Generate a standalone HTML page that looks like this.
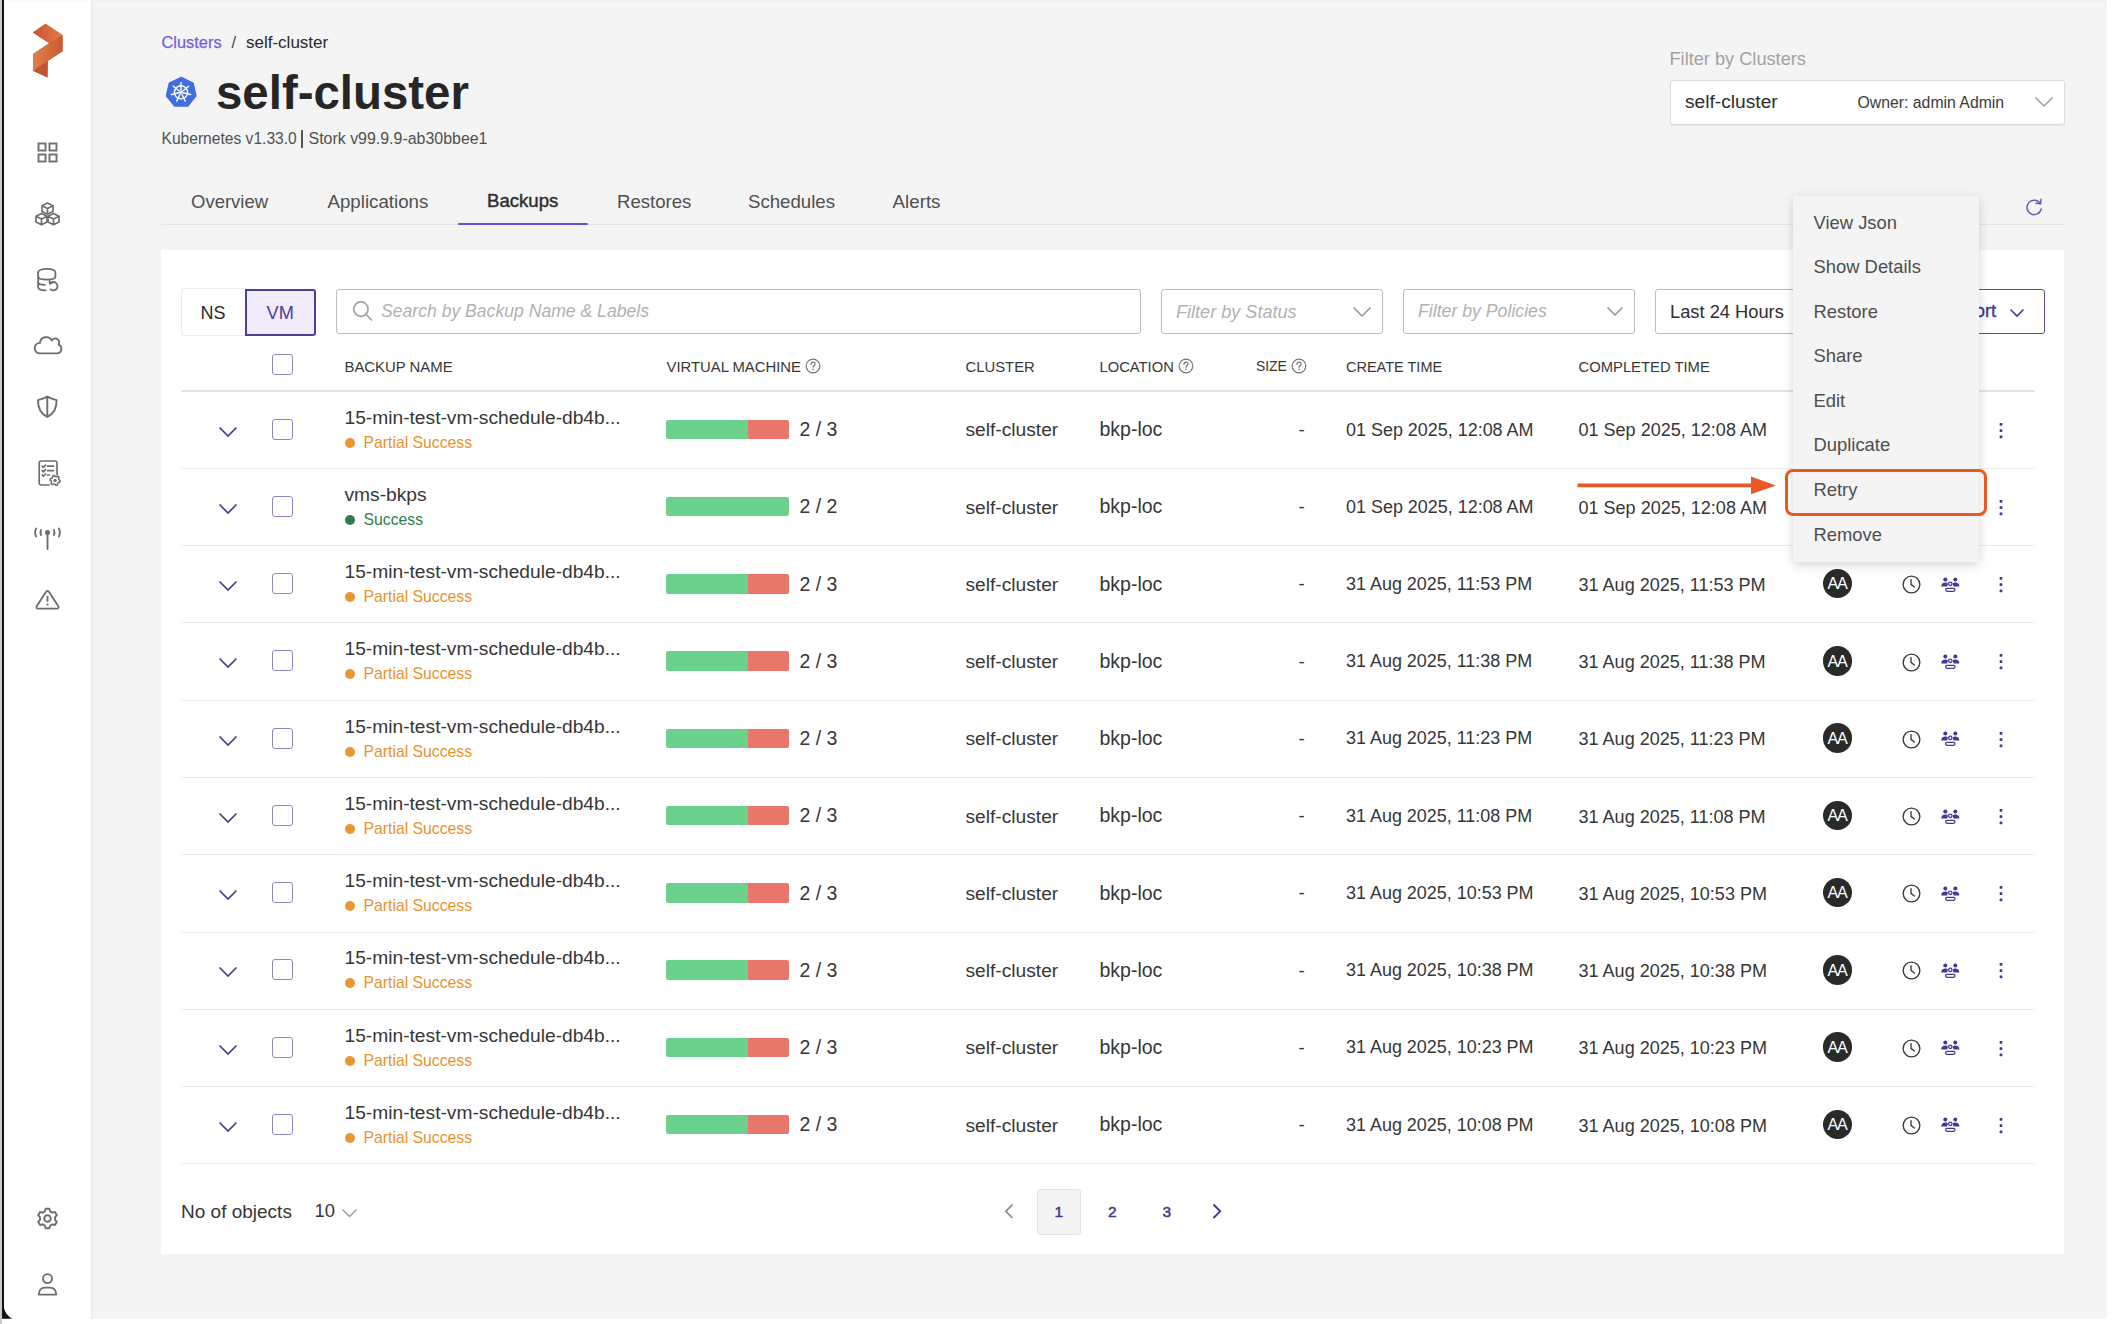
<!DOCTYPE html>
<html><head><meta charset="utf-8"><title>self-cluster backups</title>
<style>
html,body{margin:0;padding:0;}
body{width:2112px;height:1324px;position:relative;overflow:hidden;background:#fff;font-family:"Liberation Sans", sans-serif;}
.t{position:absolute;white-space:pre;}
</style></head><body>
<div style="position:absolute;left:0px;top:0px;width:2px;height:1324px;background:#c8cbc8"></div>
<div style="position:absolute;left:2px;top:0px;width:1.5px;height:1318px;background:#111"></div>
<svg style="position:absolute;left:2px;top:1304.5px" width="14" height="14" viewBox="0 0 14 14" fill="none"><path d="M0 0 L1.5 0 C2 6 5 11 10.5 13.8 L0 13.8 Z" fill="#111"/></svg>
<div style="position:absolute;left:91px;top:0px;width:2015.5px;height:1318.5px;background:#f4f4f4"></div>
<div style="position:absolute;left:91px;top:0px;width:2px;height:1318.5px;background:#ededed"></div>
<div style="position:absolute;left:91px;top:0px;width:2015.5px;height:1px;background:#efefef"></div>
<div style="position:absolute;left:4px;top:0px;width:87px;height:1px;background:#fafafa"></div>
<svg style="position:absolute;left:30px;top:20px" width="36" height="62" viewBox="0 0 36 62" fill="none">
<defs>
<linearGradient id="lgA" x1="0" y1="0" x2="1" y2="0"><stop offset="0" stop-color="#c65530"/><stop offset="1" stop-color="#e27d49"/></linearGradient>
<linearGradient id="lgB" x1="0" y1="0" x2="1" y2="0"><stop offset="0" stop-color="#e37e4a"/><stop offset="1" stop-color="#c95a32"/></linearGradient>
</defs>
<polygon points="2.9,12.5 15.5,3.8 32.6,15.1 32.6,31.3 17.8,40.9 17.5,57.6 3.1,50.8 3.1,34.1 19.2,23.3" fill="#d26a3c"/>
<polygon points="2.9,12.5 15.5,3.8 32.6,15.1 19.2,23.3" fill="url(#lgA)"/>
<polygon points="3.1,34.1 19.2,23.3 32.6,15.1 32.6,31.3 17.8,40.9 3.1,50.8" fill="url(#lgB)"/>
<polygon points="3.1,50.8 17.8,40.9 17.5,57.6" fill="#c05530"/>
</svg>
<svg style="position:absolute;left:36px;top:141px" width="23" height="23" viewBox="0 0 23 23" fill="none"><g stroke="#6e6e6e" stroke-width="1.9">
<rect x="2.5" y="2.5" width="7" height="7"/><rect x="13.5" y="2.5" width="7" height="7"/>
<rect x="2.5" y="13.5" width="7" height="7"/><rect x="13.5" y="13.5" width="7" height="7"/></g></svg>
<svg style="position:absolute;left:33px;top:201px" width="29" height="27" viewBox="0 0 29 27" fill="none"><g stroke="#6e6e6e" stroke-width="1.7" stroke-linejoin="round">
<path d="M14.5 2 L20 4.8 L20 10.5 L14.5 13.3 L9 10.5 L9 4.8 Z M9 4.8 L14.5 7.6 L20 4.8 M14.5 7.6 L14.5 13.3"/>
<path d="M8.5 12.5 L14 15.3 L14 21 L8.5 23.8 L3 21 L3 15.3 Z M3 15.3 L8.5 18.1 L14 15.3 M8.5 18.1 L8.5 23.8"/>
<path d="M20.5 12.5 L26 15.3 L26 21 L20.5 23.8 L15 21 L15 15.3 Z M15 15.3 L20.5 18.1 L26 15.3 M20.5 18.1 L20.5 23.8"/>
</g></svg>
<svg style="position:absolute;left:35px;top:266px" width="25" height="28" viewBox="0 0 25 28" fill="none"><g stroke="#6e6e6e" stroke-width="1.8" stroke-linecap="round" stroke-linejoin="round">
<path d="M3.2 6.5 C3.2 4 7 2.8 11.8 2.8 C16.6 2.8 20.4 4 20.4 6.5 V10.5"/>
<path d="M3.2 6.5 V21.5 C3.2 23.2 6.5 24.2 10.5 24.3"/>
<path d="M3.2 10.8 C3.2 12.6 7 13.6 11.8 13.6 C16.6 13.6 20.4 12.6 20.4 10.8"/>
<path d="M3.2 16.5 C3.2 18 6 18.8 9.8 18.9"/>
<path d="M15 17.6 A4.2 4.2 0 1 1 15.6 23.4"/><path d="M17.4 16.4 L14.8 17.6 L14.6 14.9"/>
</g></svg>
<svg style="position:absolute;left:32px;top:333px" width="31" height="25" viewBox="0 0 31 25" fill="none"><path d="M7 20.4 H25 A4.6 4.6 0 0 0 26.6 11.6 A3.9 3.9 0 0 0 19.8 7.4 A6.3 6.3 0 0 0 8 9.9 A5.3 5.3 0 0 0 7 20.4 Z" stroke="#6e6e6e" stroke-width="1.9" stroke-linejoin="round"/></svg>
<svg style="position:absolute;left:35px;top:393px" width="25" height="27" viewBox="0 0 25 27" fill="none"><g stroke="#6e6e6e" stroke-width="1.9" stroke-linejoin="round">
<path d="M12.3 3.4 C10.2 5 6.4 6 3 7.2 C2.8 15 6 20.8 12.3 24 C18.6 20.8 21.8 15 21.6 7.2 C18.2 6 14.4 5 12.3 3.4 Z"/><path d="M12.3 3.4 V24"/></g></svg>
<svg style="position:absolute;left:37px;top:458.5px" width="27" height="30" viewBox="0 0 27 30" fill="none"><g stroke="#6e6e6e" stroke-width="1.7" stroke-linecap="round" stroke-linejoin="round">
<path d="M12 26 H4.3 C2.9 26 2.2 25.3 2.2 23.9 V4.1 C2.2 2.7 2.9 2 4.3 2 H17.9 C19.3 2 20 2.7 20 4.1 V15.5"/>
<path d="M5.2 7.2 L6.4 8.4 L8.6 6.2 M10.6 7.2 H16.5 M5.2 11.6 L6.4 12.8 L8.6 10.6 M10.6 11.6 H16.5 M5.2 16 L6.4 17.2 L8.6 15 M10.6 16 H12.3"/>
</g>
<polygon points="23.10,21.40 23.06,22.05 22.93,22.69 22.72,23.31 21.48,23.35 21.19,23.77 20.86,24.16 20.47,24.49 20.60,25.73 20.01,26.02 19.39,26.23 18.75,26.36 18.10,25.30 17.59,25.27 17.09,25.17 16.61,25.00 15.60,25.73 15.06,25.37 14.56,24.94 14.13,24.44 14.72,23.35 14.50,22.89 14.33,22.41 14.23,21.91 13.10,21.40 13.14,20.75 13.27,20.11 13.48,19.49 14.72,19.45 15.01,19.03 15.34,18.64 15.73,18.31 15.60,17.07 16.19,16.78 16.81,16.57 17.45,16.44 18.10,17.50 18.61,17.53 19.11,17.63 19.59,17.80 20.60,17.07 21.14,17.43 21.64,17.86 22.07,18.36 21.48,19.45 21.70,19.91 21.87,20.39 21.97,20.89" fill="none" stroke="#6e6e6e" stroke-width="1.5" stroke-linejoin="round"/>
<circle cx="18.1" cy="21.4" r="1.7" fill="#6e6e6e"/></svg>
<svg style="position:absolute;left:33px;top:525.8px" width="29" height="26" viewBox="0 0 29 26" fill="none"><g stroke="#6e6e6e" stroke-width="1.9" stroke-linecap="round">
<path d="M14.5 7 V23"/><circle cx="14.5" cy="6.5" r="1.6" fill="#6e6e6e"/>
<path d="M3.2 2.5 C1.8 4.5 1.8 8.5 3.2 10.5"/><path d="M25.8 2.5 C27.2 4.5 27.2 8.5 25.8 10.5"/>
<path d="M8 4 C7.4 5.5 7.4 7.5 8 9"/><path d="M21 4 C21.6 5.5 21.6 7.5 21 9"/>
</g></svg>
<svg style="position:absolute;left:34px;top:587px" width="27" height="25" viewBox="0 0 27 25" fill="none"><g stroke="#6e6e6e" stroke-width="1.9" stroke-linejoin="round" stroke-linecap="round">
<path d="M11.9 5.0 C12.7 3.6 14.3 3.6 15.1 5.0 L24.3 19.2 C25.1 20.6 24.3 21.6 22.8 21.6 H4.2 C2.7 21.6 1.9 20.6 2.7 19.2 Z"/><path d="M13.5 9.7 V13.9"/></g><circle cx="13.5" cy="17.6" r="1.15" fill="#6e6e6e"/></svg>
<svg style="position:absolute;left:34px;top:1205px" width="27" height="27" viewBox="0 0 27 27" fill="none"><polygon points="16.10,6.36 15.39,3.78 11.61,3.78 10.90,6.36 8.61,7.68 6.03,7.01 4.14,10.28 6.02,12.18 6.02,14.82 4.14,16.72 6.03,19.99 8.61,19.32 10.90,20.64 11.61,23.22 15.39,23.22 16.10,20.64 18.39,19.32 20.97,19.99 22.86,16.72 20.98,14.82 20.98,12.18 22.86,10.28 20.97,7.01 18.39,7.68" stroke="#6e6e6e" stroke-width="1.9" stroke-linejoin="round" fill="none"/>
<circle cx="13.5" cy="13.5" r="3.3" stroke="#6e6e6e" stroke-width="1.9" fill="none"/></svg>
<svg style="position:absolute;left:35px;top:1271px" width="25" height="27" viewBox="0 0 25 27" fill="none"><g stroke="#6e6e6e" stroke-width="1.9" stroke-linejoin="round">
<circle cx="12.5" cy="7.6" r="4.5"/><path d="M3.8 23.6 C3.8 19.6 6 16.6 10 16.6 H15 C19 16.6 21.2 19.6 21.2 23.6 Z"/></g></svg>
<div class="t" style="left:161.50px;top:34.12px;font-size:16.4px;line-height:16.4px;color:#7a5cdb;font-weight:400;font-style:normal;-webkit-text-stroke:0.25px #7a5cdb">Clusters</div>
<div class="t" style="left:231.50px;top:34.12px;font-size:16.4px;line-height:16.4px;color:#444;font-weight:400;font-style:normal;">/</div>
<div class="t" style="left:246.00px;top:33.61px;font-size:17.0px;line-height:17.0px;color:#2a2a2a;font-weight:400;font-style:normal;">self-cluster</div>
<svg style="position:absolute;left:166px;top:76px" width="31" height="32" viewBox="0 0 31 32" fill="none"><polygon points="15.20,1.40 27.01,7.09 29.92,19.86 21.75,30.10 8.65,30.10 0.48,19.86 3.39,7.09" fill="#416de0" stroke="#416de0" stroke-width="1.5" stroke-linejoin="round"/><g stroke="#fff" stroke-width="1.4" stroke-linecap="round"><circle cx="15" cy="16.3" r="6.6"/><line x1="15.00" y1="14.10" x2="15.00" y2="6.50"/><line x1="16.72" y1="14.93" x2="22.66" y2="10.19"/><line x1="17.14" y1="16.79" x2="24.55" y2="18.48"/><line x1="15.95" y1="18.28" x2="19.25" y2="25.13"/><line x1="14.05" y1="18.28" x2="10.75" y2="25.13"/><line x1="12.86" y1="16.79" x2="5.45" y2="18.48"/><line x1="13.28" y1="14.93" x2="7.34" y2="10.19"/></g><circle cx="15" cy="16.3" r="1.7" fill="#fff"/></svg>
<div class="t" style="left:216.00px;top:68.88px;font-size:47.4px;line-height:47.4px;color:#262626;font-weight:700;font-style:normal;">self-cluster</div>
<div class="t" style="left:161.50px;top:131.39px;font-size:15.6px;line-height:15.6px;color:#505050;font-weight:400;font-style:normal;">Kubernetes v1.33.0</div>
<div style="position:absolute;left:301px;top:130px;width:2px;height:17.5px;background:#555"></div>
<div class="t" style="left:308.50px;top:131.10px;font-size:15.95px;line-height:15.95px;color:#505050;font-weight:400;font-style:normal;">Stork v99.9.9-ab30bbee1</div>
<div class="t" style="left:1669.50px;top:49.89px;font-size:18.2px;line-height:18.2px;color:#a2a2a2;font-weight:400;font-style:normal;">Filter by Clusters</div>
<div style="position:absolute;left:1669.5px;top:79.5px;width:393.5px;height:43px;background:#fff;border:1px solid #dcdcdc;border-radius:3px;box-shadow:0 1px 1px rgba(0,0,0,0.06)"></div>
<div class="t" style="left:1685.00px;top:91.95px;font-size:19.2px;line-height:19.2px;color:#2e2e2e;font-weight:400;font-style:normal;">self-cluster</div>
<div class="t" style="left:1857.50px;top:94.83px;font-size:15.8px;line-height:15.8px;color:#3a3a3a;font-weight:400;font-style:normal;">Owner: admin Admin</div>
<svg style="position:absolute;left:2034px;top:96px" width="20" height="12" viewBox="0 0 20 12" fill="none"><path d="M1.5 1.5 L10 10 L18.5 1.5" stroke="#999" stroke-width="1.35"/></svg>
<div class="t" style="left:191.00px;top:192.94px;font-size:18.5px;line-height:18.5px;color:#4f4f4f;font-weight:400;font-style:normal;">Overview</div>
<div class="t" style="left:327.50px;top:192.77px;font-size:18.7px;line-height:18.7px;color:#4f4f4f;font-weight:400;font-style:normal;">Applications</div>
<div class="t" style="left:487.00px;top:191.66px;font-size:18.6px;line-height:18.6px;color:#303030;font-weight:400;font-style:normal;-webkit-text-stroke:0.45px #303030">Backups</div>
<div class="t" style="left:617.00px;top:192.86px;font-size:18.6px;line-height:18.6px;color:#4f4f4f;font-weight:400;font-style:normal;">Restores</div>
<div class="t" style="left:748.00px;top:192.81px;font-size:18.65px;line-height:18.65px;color:#4f4f4f;font-weight:400;font-style:normal;">Schedules</div>
<div class="t" style="left:892.50px;top:192.69px;font-size:18.8px;line-height:18.8px;color:#4f4f4f;font-weight:400;font-style:normal;">Alerts</div>
<div style="position:absolute;left:161px;top:224px;width:1903px;height:1px;background:#e4e4e4"></div>
<div style="position:absolute;left:458px;top:223px;width:130px;height:2.2px;background:#6b4fd8;border-radius:1px"></div>
<svg style="position:absolute;left:2024px;top:197px" width="20" height="20" viewBox="0 0 20 20" fill="none"><path d="M16.2 6.5 A7.2 7.2 0 1 0 17.2 12" stroke="#685ca6" stroke-width="1.45" fill="none" stroke-linecap="round"/><path d="M17 2.2 L16.6 6.9 L12 6.3" stroke="#685ca6" stroke-width="1.45" fill="none" stroke-linecap="round" stroke-linejoin="round"/></svg>
<div style="position:absolute;left:161px;top:250px;width:1903px;height:1004px;background:#fff"></div>
<div style="position:absolute;left:180.5px;top:288.3px;width:66px;height:48px;background:#fff;border:1px solid #ececec;border-right:none;border-radius:3px 0 0 3px;box-sizing:border-box"></div>
<div style="position:absolute;left:245px;top:289px;width:70.5px;height:47px;background:#f1ebfb;border:2.5px solid #4f3d9c;border-radius:0 3px 3px 0;box-sizing:border-box"></div>
<div class="t" style="left:200.50px;top:304.26px;font-size:18px;line-height:18px;color:#2a2a2a;font-weight:400;font-style:normal;">NS</div>
<div class="t" style="left:266.50px;top:304.09px;font-size:18.2px;line-height:18.2px;color:#4f3d9c;font-weight:400;font-style:normal;">VM</div>
<div style="position:absolute;left:335.5px;top:289px;width:805px;height:45px;background:#fff;border:1px solid #bdbdbd;border-radius:3px;box-sizing:border-box"></div>
<svg style="position:absolute;left:351px;top:300px" width="24" height="23" viewBox="0 0 24 23" fill="none"><circle cx="9.9" cy="9.1" r="7.2" stroke="#a2a2a2" stroke-width="1.75"/><path d="M15 14.4 L20.6 20" stroke="#a2a2a2" stroke-width="1.75" stroke-linecap="round"/></svg>
<div class="t" style="left:381.00px;top:303.10px;font-size:17.6px;line-height:17.6px;color:#b1b1b1;font-weight:400;font-style:italic;">Search by Backup Name &amp; Labels</div>
<div style="position:absolute;left:1160.5px;top:289px;width:222px;height:45px;background:#fff;border:1px solid #bdbdbd;border-radius:3px;box-sizing:border-box"></div>
<div class="t" style="left:1176.00px;top:302.68px;font-size:18.1px;line-height:18.1px;color:#b1b1b1;font-weight:400;font-style:italic;">Filter by Status</div>
<svg style="position:absolute;left:1352px;top:306px" width="20" height="13" viewBox="0 0 20 13" fill="none"><path d="M1.5 1.5 L10 10 L18.5 1.5" stroke="#939393" stroke-width="1.45"/></svg>
<div style="position:absolute;left:1402.5px;top:289px;width:232px;height:45px;background:#fff;border:1px solid #bdbdbd;border-radius:3px;box-sizing:border-box"></div>
<div class="t" style="left:1418.00px;top:303.02px;font-size:17.7px;line-height:17.7px;color:#b1b1b1;font-weight:400;font-style:italic;">Filter by Policies</div>
<svg style="position:absolute;left:1606px;top:306px" width="18" height="13" viewBox="0 0 18 13" fill="none"><path d="M1.5 1.5 L9 9 L16.5 1.5" stroke="#939393" stroke-width="1.45"/></svg>
<div style="position:absolute;left:1654.5px;top:289px;width:180px;height:45px;background:#fff;border:1px solid #bdbdbd;border-radius:3px;box-sizing:border-box"></div>
<div class="t" style="left:1670.00px;top:302.51px;font-size:18.3px;line-height:18.3px;color:#2e2e2e;font-weight:400;font-style:normal;">Last 24 Hours</div>
<div style="position:absolute;left:1900px;top:289px;width:145px;height:45px;background:#fff;border:1.5px solid #5a4ba6;border-radius:3px;box-sizing:border-box"></div>
<div class="t" style="left:1943.00px;top:302.42px;font-size:18.4px;line-height:18.4px;color:#45398f;font-weight:400;font-style:normal;-webkit-text-stroke:0.4px #45398f">Export</div>
<svg style="position:absolute;left:2009px;top:308px" width="16" height="10" viewBox="0 0 16 10" fill="none"><path d="M1.5 1.5 L8 8 L14.5 1.5" stroke="#4a3d96" stroke-width="1.6"/></svg>
<div style="position:absolute;left:272px;top:354px;width:21px;height:21px;border:1.5px solid #8f87c2;border-radius:3px;box-sizing:border-box;background:#fff"></div>
<div class="t" style="left:344.50px;top:359.59px;font-size:14.9px;line-height:14.9px;color:#383838;font-weight:400;font-style:normal;">BACKUP NAME</div>
<div class="t" style="left:666.50px;top:359.63px;font-size:14.85px;line-height:14.85px;color:#383838;font-weight:400;font-style:normal;">VIRTUAL MACHINE</div>
<svg style="position:absolute;left:804.5px;top:358px" width="16" height="16" viewBox="0 0 16 16" fill="none"><circle cx="8" cy="8" r="6.8" stroke="#777" stroke-width="1.2"/><path d="M6 6.3 C6 4.9 7 4.2 8 4.2 C9.2 4.2 10.1 5 10.1 6.1 C10.1 7.5 8.1 7.6 8.1 9.2" stroke="#777" stroke-width="1.2" stroke-linecap="round"/><circle cx="8.1" cy="11.4" r="0.8" fill="#777"/></svg>
<div class="t" style="left:965.50px;top:359.63px;font-size:14.85px;line-height:14.85px;color:#383838;font-weight:400;font-style:normal;">CLUSTER</div>
<div class="t" style="left:1099.50px;top:359.71px;font-size:14.75px;line-height:14.75px;color:#383838;font-weight:400;font-style:normal;">LOCATION</div>
<svg style="position:absolute;left:1177.5px;top:358px" width="16" height="16" viewBox="0 0 16 16" fill="none"><circle cx="8" cy="8" r="6.8" stroke="#777" stroke-width="1.2"/><path d="M6 6.3 C6 4.9 7 4.2 8 4.2 C9.2 4.2 10.1 5 10.1 6.1 C10.1 7.5 8.1 7.6 8.1 9.2" stroke="#777" stroke-width="1.2" stroke-linecap="round"/><circle cx="8.1" cy="11.4" r="0.8" fill="#777"/></svg>
<div class="t" style="left:1256.00px;top:360.43px;font-size:13.9px;line-height:13.9px;color:#383838;font-weight:400;font-style:normal;">SIZE</div>
<svg style="position:absolute;left:1290.5px;top:358px" width="16" height="16" viewBox="0 0 16 16" fill="none"><circle cx="8" cy="8" r="6.8" stroke="#777" stroke-width="1.2"/><path d="M6 6.3 C6 4.9 7 4.2 8 4.2 C9.2 4.2 10.1 5 10.1 6.1 C10.1 7.5 8.1 7.6 8.1 9.2" stroke="#777" stroke-width="1.2" stroke-linecap="round"/><circle cx="8.1" cy="11.4" r="0.8" fill="#777"/></svg>
<div class="t" style="left:1346.00px;top:359.93px;font-size:14.5px;line-height:14.5px;color:#383838;font-weight:400;font-style:normal;">CREATE TIME</div>
<div class="t" style="left:1578.50px;top:359.67px;font-size:14.8px;line-height:14.8px;color:#383838;font-weight:400;font-style:normal;">COMPLETED TIME</div>
<div style="position:absolute;left:181px;top:390px;width:1854px;height:2px;background:#e3e3e3"></div>
<div style="position:absolute;left:181px;top:468px;width:1854px;height:1px;background:#ebebeb"></div>
<svg style="position:absolute;left:218px;top:425.7px" width="20" height="12" viewBox="0 0 20 12" fill="none"><path d="M1.5 1.5 L10 10 L18.5 1.5" stroke="#4a3d8f" stroke-width="1.7"/></svg>
<div style="position:absolute;left:272px;top:418.7px;width:21px;height:21px;border:1.5px solid #8f87c2;border-radius:3px;box-sizing:border-box;background:#fff"></div>
<div class="t" style="left:344.50px;top:407.65px;font-size:19.2px;line-height:19.2px;color:#363636;font-weight:400;font-style:normal;">15-min-test-vm-schedule-db4b...</div>
<div style="position:absolute;left:344.5px;top:437.7px;width:10px;height:10px;border-radius:50%;background:#eb9535"></div>
<div class="t" style="left:363.50px;top:434.67px;font-size:15.75px;line-height:15.75px;color:#e8922e;font-weight:400;font-style:normal;">Partial Success</div>
<div style="position:absolute;left:666px;top:419.7px;width:123px;height:19.5px;border-radius:2px;background:linear-gradient(to right,#6bd18c 0,#6bd18c 82px,#e8766b 82px,#e8766b 100%)"></div>
<div class="t" style="left:799.50px;top:420.19px;font-size:19.5px;line-height:19.5px;color:#363636;font-weight:400;font-style:normal;">2 / 3</div>
<div class="t" style="left:965.50px;top:420.45px;font-size:19.2px;line-height:19.2px;color:#363636;font-weight:400;font-style:normal;">self-cluster</div>
<div class="t" style="left:1099.50px;top:420.19px;font-size:19.5px;line-height:19.5px;color:#363636;font-weight:400;font-style:normal;">bkp-loc</div>
<div class="t" style="left:1298.50px;top:420.96px;font-size:18.6px;line-height:18.6px;color:#363636;font-weight:400;font-style:normal;">-</div>
<div class="t" style="left:1346.00px;top:421.51px;font-size:17.95px;line-height:17.95px;color:#363636;font-weight:400;font-style:normal;">01 Sep 2025, 12:08 AM</div>
<div class="t" style="left:1578.50px;top:421.42px;font-size:18.05px;line-height:18.05px;color:#363636;font-weight:400;font-style:normal;">01 Sep 2025, 12:08 AM</div>
<div style="position:absolute;left:1823px;top:414.50px;width:29.4px;height:29.4px;border-radius:50%;background:#2a2a2a;"></div>
<div class="t" style="left:1827.60px;top:420.89px;font-size:16.2px;line-height:16.2px;color:#fff;font-weight:400;font-style:normal;letter-spacing:-1.3px">AA</div>
<svg style="position:absolute;left:1900.5px;top:419.8px" width="21" height="21" viewBox="0 0 21 21" fill="none"><circle cx="10.5" cy="10.5" r="8.35" stroke="#3a3a3a" stroke-width="1.35"/><path d="M10 5.6 V10.4 L13.3 13" stroke="#3a3a3a" stroke-width="1.35" stroke-linecap="round"/></svg>
<svg style="position:absolute;left:1940px;top:421.3px" width="21" height="17" viewBox="0 0 21 17" fill="none"><g fill="#443891"><circle cx="5.3" cy="3.4" r="2"/><circle cx="15.3" cy="3.4" r="2"/><path d="M1.2 10.4 C1.2 8 3 6.6 5.3 6.6 C6.8 6.6 7.6 7.2 7.9 8 L7 10.4 Z"/><path d="M19.4 10.4 C19.4 8 17.6 6.6 15.3 6.6 C13.8 6.6 13 7.2 12.7 8 L13.6 10.4 Z"/></g><g stroke="#443891" stroke-width="1.25" fill="none"><circle cx="10.3" cy="7.8" r="1.7"/><rect x="5.6" y="12.4" width="9.4" height="2.9" rx="1.45"/></g></svg>
<svg style="position:absolute;left:1997px;top:421.7px" width="8" height="17" viewBox="0 0 8 17" fill="none"><g fill="#443891"><rect x="2.6" y="1" width="2.8" height="2.8" rx="0.7"/><rect x="2.6" y="7.2" width="2.8" height="2.8" rx="0.7"/><rect x="2.6" y="13.4" width="2.8" height="2.8" rx="0.7"/></g></svg>
<div style="position:absolute;left:181px;top:545px;width:1854px;height:1px;background:#ebebeb"></div>
<svg style="position:absolute;left:218px;top:502.94px" width="20" height="12" viewBox="0 0 20 12" fill="none"><path d="M1.5 1.5 L10 10 L18.5 1.5" stroke="#4a3d8f" stroke-width="1.7"/></svg>
<div style="position:absolute;left:272px;top:495.94px;width:21px;height:21px;border:1.5px solid #8f87c2;border-radius:3px;box-sizing:border-box;background:#fff"></div>
<div class="t" style="left:344.50px;top:484.89px;font-size:19.2px;line-height:19.2px;color:#363636;font-weight:400;font-style:normal;">vms-bkps</div>
<div style="position:absolute;left:344.5px;top:514.94px;width:10px;height:10px;border-radius:50%;background:#2e7d4f"></div>
<div class="t" style="left:363.50px;top:511.91px;font-size:15.75px;line-height:15.75px;color:#2e7d4f;font-weight:400;font-style:normal;">Success</div>
<div style="position:absolute;left:666px;top:496.94px;width:123px;height:19.5px;border-radius:2px;background:#6bd18c"></div>
<div class="t" style="left:799.50px;top:497.43px;font-size:19.5px;line-height:19.5px;color:#363636;font-weight:400;font-style:normal;">2 / 2</div>
<div class="t" style="left:965.50px;top:497.69px;font-size:19.2px;line-height:19.2px;color:#363636;font-weight:400;font-style:normal;">self-cluster</div>
<div class="t" style="left:1099.50px;top:497.43px;font-size:19.5px;line-height:19.5px;color:#363636;font-weight:400;font-style:normal;">bkp-loc</div>
<div class="t" style="left:1298.50px;top:498.20px;font-size:18.6px;line-height:18.6px;color:#363636;font-weight:400;font-style:normal;">-</div>
<div class="t" style="left:1346.00px;top:498.75px;font-size:17.95px;line-height:17.95px;color:#363636;font-weight:400;font-style:normal;">01 Sep 2025, 12:08 AM</div>
<div class="t" style="left:1578.50px;top:498.66px;font-size:18.05px;line-height:18.05px;color:#363636;font-weight:400;font-style:normal;">01 Sep 2025, 12:08 AM</div>
<div style="position:absolute;left:1823px;top:491.74px;width:29.4px;height:29.4px;border-radius:50%;background:#2a2a2a;"></div>
<div class="t" style="left:1827.60px;top:498.13px;font-size:16.2px;line-height:16.2px;color:#fff;font-weight:400;font-style:normal;letter-spacing:-1.3px">AA</div>
<svg style="position:absolute;left:1900.5px;top:497.04px" width="21" height="21" viewBox="0 0 21 21" fill="none"><circle cx="10.5" cy="10.5" r="8.35" stroke="#3a3a3a" stroke-width="1.35"/><path d="M10 5.6 V10.4 L13.3 13" stroke="#3a3a3a" stroke-width="1.35" stroke-linecap="round"/></svg>
<svg style="position:absolute;left:1940px;top:498.54px" width="21" height="17" viewBox="0 0 21 17" fill="none"><g fill="#443891"><circle cx="5.3" cy="3.4" r="2"/><circle cx="15.3" cy="3.4" r="2"/><path d="M1.2 10.4 C1.2 8 3 6.6 5.3 6.6 C6.8 6.6 7.6 7.2 7.9 8 L7 10.4 Z"/><path d="M19.4 10.4 C19.4 8 17.6 6.6 15.3 6.6 C13.8 6.6 13 7.2 12.7 8 L13.6 10.4 Z"/></g><g stroke="#443891" stroke-width="1.25" fill="none"><circle cx="10.3" cy="7.8" r="1.7"/><rect x="5.6" y="12.4" width="9.4" height="2.9" rx="1.45"/></g></svg>
<svg style="position:absolute;left:1997px;top:498.94px" width="8" height="17" viewBox="0 0 8 17" fill="none"><g fill="#443891"><rect x="2.6" y="1" width="2.8" height="2.8" rx="0.7"/><rect x="2.6" y="7.2" width="2.8" height="2.8" rx="0.7"/><rect x="2.6" y="13.4" width="2.8" height="2.8" rx="0.7"/></g></svg>
<div style="position:absolute;left:181px;top:622px;width:1854px;height:1px;background:#ebebeb"></div>
<svg style="position:absolute;left:218px;top:580.18px" width="20" height="12" viewBox="0 0 20 12" fill="none"><path d="M1.5 1.5 L10 10 L18.5 1.5" stroke="#4a3d8f" stroke-width="1.7"/></svg>
<div style="position:absolute;left:272px;top:573.18px;width:21px;height:21px;border:1.5px solid #8f87c2;border-radius:3px;box-sizing:border-box;background:#fff"></div>
<div class="t" style="left:344.50px;top:562.13px;font-size:19.2px;line-height:19.2px;color:#363636;font-weight:400;font-style:normal;">15-min-test-vm-schedule-db4b...</div>
<div style="position:absolute;left:344.5px;top:592.18px;width:10px;height:10px;border-radius:50%;background:#eb9535"></div>
<div class="t" style="left:363.50px;top:589.15px;font-size:15.75px;line-height:15.75px;color:#e8922e;font-weight:400;font-style:normal;">Partial Success</div>
<div style="position:absolute;left:666px;top:574.18px;width:123px;height:19.5px;border-radius:2px;background:linear-gradient(to right,#6bd18c 0,#6bd18c 82px,#e8766b 82px,#e8766b 100%)"></div>
<div class="t" style="left:799.50px;top:574.67px;font-size:19.5px;line-height:19.5px;color:#363636;font-weight:400;font-style:normal;">2 / 3</div>
<div class="t" style="left:965.50px;top:574.93px;font-size:19.2px;line-height:19.2px;color:#363636;font-weight:400;font-style:normal;">self-cluster</div>
<div class="t" style="left:1099.50px;top:574.67px;font-size:19.5px;line-height:19.5px;color:#363636;font-weight:400;font-style:normal;">bkp-loc</div>
<div class="t" style="left:1298.50px;top:575.44px;font-size:18.6px;line-height:18.6px;color:#363636;font-weight:400;font-style:normal;">-</div>
<div class="t" style="left:1346.00px;top:575.99px;font-size:17.95px;line-height:17.95px;color:#363636;font-weight:400;font-style:normal;">31 Aug 2025, 11:53 PM</div>
<div class="t" style="left:1578.50px;top:575.90px;font-size:18.05px;line-height:18.05px;color:#363636;font-weight:400;font-style:normal;">31 Aug 2025, 11:53 PM</div>
<div style="position:absolute;left:1823px;top:568.98px;width:29.4px;height:29.4px;border-radius:50%;background:#2a2a2a;"></div>
<div class="t" style="left:1827.60px;top:575.37px;font-size:16.2px;line-height:16.2px;color:#fff;font-weight:400;font-style:normal;letter-spacing:-1.3px">AA</div>
<svg style="position:absolute;left:1900.5px;top:574.28px" width="21" height="21" viewBox="0 0 21 21" fill="none"><circle cx="10.5" cy="10.5" r="8.35" stroke="#3a3a3a" stroke-width="1.35"/><path d="M10 5.6 V10.4 L13.3 13" stroke="#3a3a3a" stroke-width="1.35" stroke-linecap="round"/></svg>
<svg style="position:absolute;left:1940px;top:575.78px" width="21" height="17" viewBox="0 0 21 17" fill="none"><g fill="#443891"><circle cx="5.3" cy="3.4" r="2"/><circle cx="15.3" cy="3.4" r="2"/><path d="M1.2 10.4 C1.2 8 3 6.6 5.3 6.6 C6.8 6.6 7.6 7.2 7.9 8 L7 10.4 Z"/><path d="M19.4 10.4 C19.4 8 17.6 6.6 15.3 6.6 C13.8 6.6 13 7.2 12.7 8 L13.6 10.4 Z"/></g><g stroke="#443891" stroke-width="1.25" fill="none"><circle cx="10.3" cy="7.8" r="1.7"/><rect x="5.6" y="12.4" width="9.4" height="2.9" rx="1.45"/></g></svg>
<svg style="position:absolute;left:1997px;top:576.18px" width="8" height="17" viewBox="0 0 8 17" fill="none"><g fill="#443891"><rect x="2.6" y="1" width="2.8" height="2.8" rx="0.7"/><rect x="2.6" y="7.2" width="2.8" height="2.8" rx="0.7"/><rect x="2.6" y="13.4" width="2.8" height="2.8" rx="0.7"/></g></svg>
<div style="position:absolute;left:181px;top:700px;width:1854px;height:1px;background:#ebebeb"></div>
<svg style="position:absolute;left:218px;top:657.42px" width="20" height="12" viewBox="0 0 20 12" fill="none"><path d="M1.5 1.5 L10 10 L18.5 1.5" stroke="#4a3d8f" stroke-width="1.7"/></svg>
<div style="position:absolute;left:272px;top:650.42px;width:21px;height:21px;border:1.5px solid #8f87c2;border-radius:3px;box-sizing:border-box;background:#fff"></div>
<div class="t" style="left:344.50px;top:639.37px;font-size:19.2px;line-height:19.2px;color:#363636;font-weight:400;font-style:normal;">15-min-test-vm-schedule-db4b...</div>
<div style="position:absolute;left:344.5px;top:669.42px;width:10px;height:10px;border-radius:50%;background:#eb9535"></div>
<div class="t" style="left:363.50px;top:666.39px;font-size:15.75px;line-height:15.75px;color:#e8922e;font-weight:400;font-style:normal;">Partial Success</div>
<div style="position:absolute;left:666px;top:651.42px;width:123px;height:19.5px;border-radius:2px;background:linear-gradient(to right,#6bd18c 0,#6bd18c 82px,#e8766b 82px,#e8766b 100%)"></div>
<div class="t" style="left:799.50px;top:651.91px;font-size:19.5px;line-height:19.5px;color:#363636;font-weight:400;font-style:normal;">2 / 3</div>
<div class="t" style="left:965.50px;top:652.17px;font-size:19.2px;line-height:19.2px;color:#363636;font-weight:400;font-style:normal;">self-cluster</div>
<div class="t" style="left:1099.50px;top:651.91px;font-size:19.5px;line-height:19.5px;color:#363636;font-weight:400;font-style:normal;">bkp-loc</div>
<div class="t" style="left:1298.50px;top:652.68px;font-size:18.6px;line-height:18.6px;color:#363636;font-weight:400;font-style:normal;">-</div>
<div class="t" style="left:1346.00px;top:653.23px;font-size:17.95px;line-height:17.95px;color:#363636;font-weight:400;font-style:normal;">31 Aug 2025, 11:38 PM</div>
<div class="t" style="left:1578.50px;top:653.14px;font-size:18.05px;line-height:18.05px;color:#363636;font-weight:400;font-style:normal;">31 Aug 2025, 11:38 PM</div>
<div style="position:absolute;left:1823px;top:646.22px;width:29.4px;height:29.4px;border-radius:50%;background:#2a2a2a;"></div>
<div class="t" style="left:1827.60px;top:652.61px;font-size:16.2px;line-height:16.2px;color:#fff;font-weight:400;font-style:normal;letter-spacing:-1.3px">AA</div>
<svg style="position:absolute;left:1900.5px;top:651.52px" width="21" height="21" viewBox="0 0 21 21" fill="none"><circle cx="10.5" cy="10.5" r="8.35" stroke="#3a3a3a" stroke-width="1.35"/><path d="M10 5.6 V10.4 L13.3 13" stroke="#3a3a3a" stroke-width="1.35" stroke-linecap="round"/></svg>
<svg style="position:absolute;left:1940px;top:653.02px" width="21" height="17" viewBox="0 0 21 17" fill="none"><g fill="#443891"><circle cx="5.3" cy="3.4" r="2"/><circle cx="15.3" cy="3.4" r="2"/><path d="M1.2 10.4 C1.2 8 3 6.6 5.3 6.6 C6.8 6.6 7.6 7.2 7.9 8 L7 10.4 Z"/><path d="M19.4 10.4 C19.4 8 17.6 6.6 15.3 6.6 C13.8 6.6 13 7.2 12.7 8 L13.6 10.4 Z"/></g><g stroke="#443891" stroke-width="1.25" fill="none"><circle cx="10.3" cy="7.8" r="1.7"/><rect x="5.6" y="12.4" width="9.4" height="2.9" rx="1.45"/></g></svg>
<svg style="position:absolute;left:1997px;top:653.42px" width="8" height="17" viewBox="0 0 8 17" fill="none"><g fill="#443891"><rect x="2.6" y="1" width="2.8" height="2.8" rx="0.7"/><rect x="2.6" y="7.2" width="2.8" height="2.8" rx="0.7"/><rect x="2.6" y="13.4" width="2.8" height="2.8" rx="0.7"/></g></svg>
<div style="position:absolute;left:181px;top:777px;width:1854px;height:1px;background:#ebebeb"></div>
<svg style="position:absolute;left:218px;top:734.66px" width="20" height="12" viewBox="0 0 20 12" fill="none"><path d="M1.5 1.5 L10 10 L18.5 1.5" stroke="#4a3d8f" stroke-width="1.7"/></svg>
<div style="position:absolute;left:272px;top:727.66px;width:21px;height:21px;border:1.5px solid #8f87c2;border-radius:3px;box-sizing:border-box;background:#fff"></div>
<div class="t" style="left:344.50px;top:716.61px;font-size:19.2px;line-height:19.2px;color:#363636;font-weight:400;font-style:normal;">15-min-test-vm-schedule-db4b...</div>
<div style="position:absolute;left:344.5px;top:746.66px;width:10px;height:10px;border-radius:50%;background:#eb9535"></div>
<div class="t" style="left:363.50px;top:743.63px;font-size:15.75px;line-height:15.75px;color:#e8922e;font-weight:400;font-style:normal;">Partial Success</div>
<div style="position:absolute;left:666px;top:728.66px;width:123px;height:19.5px;border-radius:2px;background:linear-gradient(to right,#6bd18c 0,#6bd18c 82px,#e8766b 82px,#e8766b 100%)"></div>
<div class="t" style="left:799.50px;top:729.15px;font-size:19.5px;line-height:19.5px;color:#363636;font-weight:400;font-style:normal;">2 / 3</div>
<div class="t" style="left:965.50px;top:729.41px;font-size:19.2px;line-height:19.2px;color:#363636;font-weight:400;font-style:normal;">self-cluster</div>
<div class="t" style="left:1099.50px;top:729.15px;font-size:19.5px;line-height:19.5px;color:#363636;font-weight:400;font-style:normal;">bkp-loc</div>
<div class="t" style="left:1298.50px;top:729.92px;font-size:18.6px;line-height:18.6px;color:#363636;font-weight:400;font-style:normal;">-</div>
<div class="t" style="left:1346.00px;top:730.47px;font-size:17.95px;line-height:17.95px;color:#363636;font-weight:400;font-style:normal;">31 Aug 2025, 11:23 PM</div>
<div class="t" style="left:1578.50px;top:730.38px;font-size:18.05px;line-height:18.05px;color:#363636;font-weight:400;font-style:normal;">31 Aug 2025, 11:23 PM</div>
<div style="position:absolute;left:1823px;top:723.46px;width:29.4px;height:29.4px;border-radius:50%;background:#2a2a2a;"></div>
<div class="t" style="left:1827.60px;top:729.85px;font-size:16.2px;line-height:16.2px;color:#fff;font-weight:400;font-style:normal;letter-spacing:-1.3px">AA</div>
<svg style="position:absolute;left:1900.5px;top:728.76px" width="21" height="21" viewBox="0 0 21 21" fill="none"><circle cx="10.5" cy="10.5" r="8.35" stroke="#3a3a3a" stroke-width="1.35"/><path d="M10 5.6 V10.4 L13.3 13" stroke="#3a3a3a" stroke-width="1.35" stroke-linecap="round"/></svg>
<svg style="position:absolute;left:1940px;top:730.26px" width="21" height="17" viewBox="0 0 21 17" fill="none"><g fill="#443891"><circle cx="5.3" cy="3.4" r="2"/><circle cx="15.3" cy="3.4" r="2"/><path d="M1.2 10.4 C1.2 8 3 6.6 5.3 6.6 C6.8 6.6 7.6 7.2 7.9 8 L7 10.4 Z"/><path d="M19.4 10.4 C19.4 8 17.6 6.6 15.3 6.6 C13.8 6.6 13 7.2 12.7 8 L13.6 10.4 Z"/></g><g stroke="#443891" stroke-width="1.25" fill="none"><circle cx="10.3" cy="7.8" r="1.7"/><rect x="5.6" y="12.4" width="9.4" height="2.9" rx="1.45"/></g></svg>
<svg style="position:absolute;left:1997px;top:730.66px" width="8" height="17" viewBox="0 0 8 17" fill="none"><g fill="#443891"><rect x="2.6" y="1" width="2.8" height="2.8" rx="0.7"/><rect x="2.6" y="7.2" width="2.8" height="2.8" rx="0.7"/><rect x="2.6" y="13.4" width="2.8" height="2.8" rx="0.7"/></g></svg>
<div style="position:absolute;left:181px;top:854px;width:1854px;height:1px;background:#ebebeb"></div>
<svg style="position:absolute;left:218px;top:811.9px" width="20" height="12" viewBox="0 0 20 12" fill="none"><path d="M1.5 1.5 L10 10 L18.5 1.5" stroke="#4a3d8f" stroke-width="1.7"/></svg>
<div style="position:absolute;left:272px;top:804.9px;width:21px;height:21px;border:1.5px solid #8f87c2;border-radius:3px;box-sizing:border-box;background:#fff"></div>
<div class="t" style="left:344.50px;top:793.85px;font-size:19.2px;line-height:19.2px;color:#363636;font-weight:400;font-style:normal;">15-min-test-vm-schedule-db4b...</div>
<div style="position:absolute;left:344.5px;top:823.9px;width:10px;height:10px;border-radius:50%;background:#eb9535"></div>
<div class="t" style="left:363.50px;top:820.87px;font-size:15.75px;line-height:15.75px;color:#e8922e;font-weight:400;font-style:normal;">Partial Success</div>
<div style="position:absolute;left:666px;top:805.9px;width:123px;height:19.5px;border-radius:2px;background:linear-gradient(to right,#6bd18c 0,#6bd18c 82px,#e8766b 82px,#e8766b 100%)"></div>
<div class="t" style="left:799.50px;top:806.39px;font-size:19.5px;line-height:19.5px;color:#363636;font-weight:400;font-style:normal;">2 / 3</div>
<div class="t" style="left:965.50px;top:806.65px;font-size:19.2px;line-height:19.2px;color:#363636;font-weight:400;font-style:normal;">self-cluster</div>
<div class="t" style="left:1099.50px;top:806.39px;font-size:19.5px;line-height:19.5px;color:#363636;font-weight:400;font-style:normal;">bkp-loc</div>
<div class="t" style="left:1298.50px;top:807.16px;font-size:18.6px;line-height:18.6px;color:#363636;font-weight:400;font-style:normal;">-</div>
<div class="t" style="left:1346.00px;top:807.71px;font-size:17.95px;line-height:17.95px;color:#363636;font-weight:400;font-style:normal;">31 Aug 2025, 11:08 PM</div>
<div class="t" style="left:1578.50px;top:807.62px;font-size:18.05px;line-height:18.05px;color:#363636;font-weight:400;font-style:normal;">31 Aug 2025, 11:08 PM</div>
<div style="position:absolute;left:1823px;top:800.70px;width:29.4px;height:29.4px;border-radius:50%;background:#2a2a2a;"></div>
<div class="t" style="left:1827.60px;top:807.09px;font-size:16.2px;line-height:16.2px;color:#fff;font-weight:400;font-style:normal;letter-spacing:-1.3px">AA</div>
<svg style="position:absolute;left:1900.5px;top:806.0px" width="21" height="21" viewBox="0 0 21 21" fill="none"><circle cx="10.5" cy="10.5" r="8.35" stroke="#3a3a3a" stroke-width="1.35"/><path d="M10 5.6 V10.4 L13.3 13" stroke="#3a3a3a" stroke-width="1.35" stroke-linecap="round"/></svg>
<svg style="position:absolute;left:1940px;top:807.5px" width="21" height="17" viewBox="0 0 21 17" fill="none"><g fill="#443891"><circle cx="5.3" cy="3.4" r="2"/><circle cx="15.3" cy="3.4" r="2"/><path d="M1.2 10.4 C1.2 8 3 6.6 5.3 6.6 C6.8 6.6 7.6 7.2 7.9 8 L7 10.4 Z"/><path d="M19.4 10.4 C19.4 8 17.6 6.6 15.3 6.6 C13.8 6.6 13 7.2 12.7 8 L13.6 10.4 Z"/></g><g stroke="#443891" stroke-width="1.25" fill="none"><circle cx="10.3" cy="7.8" r="1.7"/><rect x="5.6" y="12.4" width="9.4" height="2.9" rx="1.45"/></g></svg>
<svg style="position:absolute;left:1997px;top:807.9px" width="8" height="17" viewBox="0 0 8 17" fill="none"><g fill="#443891"><rect x="2.6" y="1" width="2.8" height="2.8" rx="0.7"/><rect x="2.6" y="7.2" width="2.8" height="2.8" rx="0.7"/><rect x="2.6" y="13.4" width="2.8" height="2.8" rx="0.7"/></g></svg>
<div style="position:absolute;left:181px;top:932px;width:1854px;height:1px;background:#ebebeb"></div>
<svg style="position:absolute;left:218px;top:889.14px" width="20" height="12" viewBox="0 0 20 12" fill="none"><path d="M1.5 1.5 L10 10 L18.5 1.5" stroke="#4a3d8f" stroke-width="1.7"/></svg>
<div style="position:absolute;left:272px;top:882.14px;width:21px;height:21px;border:1.5px solid #8f87c2;border-radius:3px;box-sizing:border-box;background:#fff"></div>
<div class="t" style="left:344.50px;top:871.09px;font-size:19.2px;line-height:19.2px;color:#363636;font-weight:400;font-style:normal;">15-min-test-vm-schedule-db4b...</div>
<div style="position:absolute;left:344.5px;top:901.14px;width:10px;height:10px;border-radius:50%;background:#eb9535"></div>
<div class="t" style="left:363.50px;top:898.11px;font-size:15.75px;line-height:15.75px;color:#e8922e;font-weight:400;font-style:normal;">Partial Success</div>
<div style="position:absolute;left:666px;top:883.14px;width:123px;height:19.5px;border-radius:2px;background:linear-gradient(to right,#6bd18c 0,#6bd18c 82px,#e8766b 82px,#e8766b 100%)"></div>
<div class="t" style="left:799.50px;top:883.63px;font-size:19.5px;line-height:19.5px;color:#363636;font-weight:400;font-style:normal;">2 / 3</div>
<div class="t" style="left:965.50px;top:883.89px;font-size:19.2px;line-height:19.2px;color:#363636;font-weight:400;font-style:normal;">self-cluster</div>
<div class="t" style="left:1099.50px;top:883.63px;font-size:19.5px;line-height:19.5px;color:#363636;font-weight:400;font-style:normal;">bkp-loc</div>
<div class="t" style="left:1298.50px;top:884.40px;font-size:18.6px;line-height:18.6px;color:#363636;font-weight:400;font-style:normal;">-</div>
<div class="t" style="left:1346.00px;top:884.95px;font-size:17.95px;line-height:17.95px;color:#363636;font-weight:400;font-style:normal;">31 Aug 2025, 10:53 PM</div>
<div class="t" style="left:1578.50px;top:884.86px;font-size:18.05px;line-height:18.05px;color:#363636;font-weight:400;font-style:normal;">31 Aug 2025, 10:53 PM</div>
<div style="position:absolute;left:1823px;top:877.94px;width:29.4px;height:29.4px;border-radius:50%;background:#2a2a2a;"></div>
<div class="t" style="left:1827.60px;top:884.33px;font-size:16.2px;line-height:16.2px;color:#fff;font-weight:400;font-style:normal;letter-spacing:-1.3px">AA</div>
<svg style="position:absolute;left:1900.5px;top:883.24px" width="21" height="21" viewBox="0 0 21 21" fill="none"><circle cx="10.5" cy="10.5" r="8.35" stroke="#3a3a3a" stroke-width="1.35"/><path d="M10 5.6 V10.4 L13.3 13" stroke="#3a3a3a" stroke-width="1.35" stroke-linecap="round"/></svg>
<svg style="position:absolute;left:1940px;top:884.74px" width="21" height="17" viewBox="0 0 21 17" fill="none"><g fill="#443891"><circle cx="5.3" cy="3.4" r="2"/><circle cx="15.3" cy="3.4" r="2"/><path d="M1.2 10.4 C1.2 8 3 6.6 5.3 6.6 C6.8 6.6 7.6 7.2 7.9 8 L7 10.4 Z"/><path d="M19.4 10.4 C19.4 8 17.6 6.6 15.3 6.6 C13.8 6.6 13 7.2 12.7 8 L13.6 10.4 Z"/></g><g stroke="#443891" stroke-width="1.25" fill="none"><circle cx="10.3" cy="7.8" r="1.7"/><rect x="5.6" y="12.4" width="9.4" height="2.9" rx="1.45"/></g></svg>
<svg style="position:absolute;left:1997px;top:885.14px" width="8" height="17" viewBox="0 0 8 17" fill="none"><g fill="#443891"><rect x="2.6" y="1" width="2.8" height="2.8" rx="0.7"/><rect x="2.6" y="7.2" width="2.8" height="2.8" rx="0.7"/><rect x="2.6" y="13.4" width="2.8" height="2.8" rx="0.7"/></g></svg>
<div style="position:absolute;left:181px;top:1009px;width:1854px;height:1px;background:#ebebeb"></div>
<svg style="position:absolute;left:218px;top:966.38px" width="20" height="12" viewBox="0 0 20 12" fill="none"><path d="M1.5 1.5 L10 10 L18.5 1.5" stroke="#4a3d8f" stroke-width="1.7"/></svg>
<div style="position:absolute;left:272px;top:959.38px;width:21px;height:21px;border:1.5px solid #8f87c2;border-radius:3px;box-sizing:border-box;background:#fff"></div>
<div class="t" style="left:344.50px;top:948.33px;font-size:19.2px;line-height:19.2px;color:#363636;font-weight:400;font-style:normal;">15-min-test-vm-schedule-db4b...</div>
<div style="position:absolute;left:344.5px;top:978.38px;width:10px;height:10px;border-radius:50%;background:#eb9535"></div>
<div class="t" style="left:363.50px;top:975.35px;font-size:15.75px;line-height:15.75px;color:#e8922e;font-weight:400;font-style:normal;">Partial Success</div>
<div style="position:absolute;left:666px;top:960.38px;width:123px;height:19.5px;border-radius:2px;background:linear-gradient(to right,#6bd18c 0,#6bd18c 82px,#e8766b 82px,#e8766b 100%)"></div>
<div class="t" style="left:799.50px;top:960.87px;font-size:19.5px;line-height:19.5px;color:#363636;font-weight:400;font-style:normal;">2 / 3</div>
<div class="t" style="left:965.50px;top:961.13px;font-size:19.2px;line-height:19.2px;color:#363636;font-weight:400;font-style:normal;">self-cluster</div>
<div class="t" style="left:1099.50px;top:960.87px;font-size:19.5px;line-height:19.5px;color:#363636;font-weight:400;font-style:normal;">bkp-loc</div>
<div class="t" style="left:1298.50px;top:961.64px;font-size:18.6px;line-height:18.6px;color:#363636;font-weight:400;font-style:normal;">-</div>
<div class="t" style="left:1346.00px;top:962.19px;font-size:17.95px;line-height:17.95px;color:#363636;font-weight:400;font-style:normal;">31 Aug 2025, 10:38 PM</div>
<div class="t" style="left:1578.50px;top:962.10px;font-size:18.05px;line-height:18.05px;color:#363636;font-weight:400;font-style:normal;">31 Aug 2025, 10:38 PM</div>
<div style="position:absolute;left:1823px;top:955.18px;width:29.4px;height:29.4px;border-radius:50%;background:#2a2a2a;"></div>
<div class="t" style="left:1827.60px;top:961.57px;font-size:16.2px;line-height:16.2px;color:#fff;font-weight:400;font-style:normal;letter-spacing:-1.3px">AA</div>
<svg style="position:absolute;left:1900.5px;top:960.48px" width="21" height="21" viewBox="0 0 21 21" fill="none"><circle cx="10.5" cy="10.5" r="8.35" stroke="#3a3a3a" stroke-width="1.35"/><path d="M10 5.6 V10.4 L13.3 13" stroke="#3a3a3a" stroke-width="1.35" stroke-linecap="round"/></svg>
<svg style="position:absolute;left:1940px;top:961.98px" width="21" height="17" viewBox="0 0 21 17" fill="none"><g fill="#443891"><circle cx="5.3" cy="3.4" r="2"/><circle cx="15.3" cy="3.4" r="2"/><path d="M1.2 10.4 C1.2 8 3 6.6 5.3 6.6 C6.8 6.6 7.6 7.2 7.9 8 L7 10.4 Z"/><path d="M19.4 10.4 C19.4 8 17.6 6.6 15.3 6.6 C13.8 6.6 13 7.2 12.7 8 L13.6 10.4 Z"/></g><g stroke="#443891" stroke-width="1.25" fill="none"><circle cx="10.3" cy="7.8" r="1.7"/><rect x="5.6" y="12.4" width="9.4" height="2.9" rx="1.45"/></g></svg>
<svg style="position:absolute;left:1997px;top:962.38px" width="8" height="17" viewBox="0 0 8 17" fill="none"><g fill="#443891"><rect x="2.6" y="1" width="2.8" height="2.8" rx="0.7"/><rect x="2.6" y="7.2" width="2.8" height="2.8" rx="0.7"/><rect x="2.6" y="13.4" width="2.8" height="2.8" rx="0.7"/></g></svg>
<div style="position:absolute;left:181px;top:1086px;width:1854px;height:1px;background:#ebebeb"></div>
<svg style="position:absolute;left:218px;top:1043.62px" width="20" height="12" viewBox="0 0 20 12" fill="none"><path d="M1.5 1.5 L10 10 L18.5 1.5" stroke="#4a3d8f" stroke-width="1.7"/></svg>
<div style="position:absolute;left:272px;top:1036.62px;width:21px;height:21px;border:1.5px solid #8f87c2;border-radius:3px;box-sizing:border-box;background:#fff"></div>
<div class="t" style="left:344.50px;top:1025.57px;font-size:19.2px;line-height:19.2px;color:#363636;font-weight:400;font-style:normal;">15-min-test-vm-schedule-db4b...</div>
<div style="position:absolute;left:344.5px;top:1055.62px;width:10px;height:10px;border-radius:50%;background:#eb9535"></div>
<div class="t" style="left:363.50px;top:1052.59px;font-size:15.75px;line-height:15.75px;color:#e8922e;font-weight:400;font-style:normal;">Partial Success</div>
<div style="position:absolute;left:666px;top:1037.62px;width:123px;height:19.5px;border-radius:2px;background:linear-gradient(to right,#6bd18c 0,#6bd18c 82px,#e8766b 82px,#e8766b 100%)"></div>
<div class="t" style="left:799.50px;top:1038.11px;font-size:19.5px;line-height:19.5px;color:#363636;font-weight:400;font-style:normal;">2 / 3</div>
<div class="t" style="left:965.50px;top:1038.37px;font-size:19.2px;line-height:19.2px;color:#363636;font-weight:400;font-style:normal;">self-cluster</div>
<div class="t" style="left:1099.50px;top:1038.11px;font-size:19.5px;line-height:19.5px;color:#363636;font-weight:400;font-style:normal;">bkp-loc</div>
<div class="t" style="left:1298.50px;top:1038.88px;font-size:18.6px;line-height:18.6px;color:#363636;font-weight:400;font-style:normal;">-</div>
<div class="t" style="left:1346.00px;top:1039.43px;font-size:17.95px;line-height:17.95px;color:#363636;font-weight:400;font-style:normal;">31 Aug 2025, 10:23 PM</div>
<div class="t" style="left:1578.50px;top:1039.34px;font-size:18.05px;line-height:18.05px;color:#363636;font-weight:400;font-style:normal;">31 Aug 2025, 10:23 PM</div>
<div style="position:absolute;left:1823px;top:1032.42px;width:29.4px;height:29.4px;border-radius:50%;background:#2a2a2a;"></div>
<div class="t" style="left:1827.60px;top:1038.81px;font-size:16.2px;line-height:16.2px;color:#fff;font-weight:400;font-style:normal;letter-spacing:-1.3px">AA</div>
<svg style="position:absolute;left:1900.5px;top:1037.72px" width="21" height="21" viewBox="0 0 21 21" fill="none"><circle cx="10.5" cy="10.5" r="8.35" stroke="#3a3a3a" stroke-width="1.35"/><path d="M10 5.6 V10.4 L13.3 13" stroke="#3a3a3a" stroke-width="1.35" stroke-linecap="round"/></svg>
<svg style="position:absolute;left:1940px;top:1039.22px" width="21" height="17" viewBox="0 0 21 17" fill="none"><g fill="#443891"><circle cx="5.3" cy="3.4" r="2"/><circle cx="15.3" cy="3.4" r="2"/><path d="M1.2 10.4 C1.2 8 3 6.6 5.3 6.6 C6.8 6.6 7.6 7.2 7.9 8 L7 10.4 Z"/><path d="M19.4 10.4 C19.4 8 17.6 6.6 15.3 6.6 C13.8 6.6 13 7.2 12.7 8 L13.6 10.4 Z"/></g><g stroke="#443891" stroke-width="1.25" fill="none"><circle cx="10.3" cy="7.8" r="1.7"/><rect x="5.6" y="12.4" width="9.4" height="2.9" rx="1.45"/></g></svg>
<svg style="position:absolute;left:1997px;top:1039.62px" width="8" height="17" viewBox="0 0 8 17" fill="none"><g fill="#443891"><rect x="2.6" y="1" width="2.8" height="2.8" rx="0.7"/><rect x="2.6" y="7.2" width="2.8" height="2.8" rx="0.7"/><rect x="2.6" y="13.4" width="2.8" height="2.8" rx="0.7"/></g></svg>
<div style="position:absolute;left:181px;top:1163px;width:1854px;height:1px;background:#ebebeb"></div>
<svg style="position:absolute;left:218px;top:1120.86px" width="20" height="12" viewBox="0 0 20 12" fill="none"><path d="M1.5 1.5 L10 10 L18.5 1.5" stroke="#4a3d8f" stroke-width="1.7"/></svg>
<div style="position:absolute;left:272px;top:1113.86px;width:21px;height:21px;border:1.5px solid #8f87c2;border-radius:3px;box-sizing:border-box;background:#fff"></div>
<div class="t" style="left:344.50px;top:1102.81px;font-size:19.2px;line-height:19.2px;color:#363636;font-weight:400;font-style:normal;">15-min-test-vm-schedule-db4b...</div>
<div style="position:absolute;left:344.5px;top:1132.86px;width:10px;height:10px;border-radius:50%;background:#eb9535"></div>
<div class="t" style="left:363.50px;top:1129.83px;font-size:15.75px;line-height:15.75px;color:#e8922e;font-weight:400;font-style:normal;">Partial Success</div>
<div style="position:absolute;left:666px;top:1114.86px;width:123px;height:19.5px;border-radius:2px;background:linear-gradient(to right,#6bd18c 0,#6bd18c 82px,#e8766b 82px,#e8766b 100%)"></div>
<div class="t" style="left:799.50px;top:1115.35px;font-size:19.5px;line-height:19.5px;color:#363636;font-weight:400;font-style:normal;">2 / 3</div>
<div class="t" style="left:965.50px;top:1115.61px;font-size:19.2px;line-height:19.2px;color:#363636;font-weight:400;font-style:normal;">self-cluster</div>
<div class="t" style="left:1099.50px;top:1115.35px;font-size:19.5px;line-height:19.5px;color:#363636;font-weight:400;font-style:normal;">bkp-loc</div>
<div class="t" style="left:1298.50px;top:1116.12px;font-size:18.6px;line-height:18.6px;color:#363636;font-weight:400;font-style:normal;">-</div>
<div class="t" style="left:1346.00px;top:1116.67px;font-size:17.95px;line-height:17.95px;color:#363636;font-weight:400;font-style:normal;">31 Aug 2025, 10:08 PM</div>
<div class="t" style="left:1578.50px;top:1116.58px;font-size:18.05px;line-height:18.05px;color:#363636;font-weight:400;font-style:normal;">31 Aug 2025, 10:08 PM</div>
<div style="position:absolute;left:1823px;top:1109.66px;width:29.4px;height:29.4px;border-radius:50%;background:#2a2a2a;"></div>
<div class="t" style="left:1827.60px;top:1116.05px;font-size:16.2px;line-height:16.2px;color:#fff;font-weight:400;font-style:normal;letter-spacing:-1.3px">AA</div>
<svg style="position:absolute;left:1900.5px;top:1114.96px" width="21" height="21" viewBox="0 0 21 21" fill="none"><circle cx="10.5" cy="10.5" r="8.35" stroke="#3a3a3a" stroke-width="1.35"/><path d="M10 5.6 V10.4 L13.3 13" stroke="#3a3a3a" stroke-width="1.35" stroke-linecap="round"/></svg>
<svg style="position:absolute;left:1940px;top:1116.46px" width="21" height="17" viewBox="0 0 21 17" fill="none"><g fill="#443891"><circle cx="5.3" cy="3.4" r="2"/><circle cx="15.3" cy="3.4" r="2"/><path d="M1.2 10.4 C1.2 8 3 6.6 5.3 6.6 C6.8 6.6 7.6 7.2 7.9 8 L7 10.4 Z"/><path d="M19.4 10.4 C19.4 8 17.6 6.6 15.3 6.6 C13.8 6.6 13 7.2 12.7 8 L13.6 10.4 Z"/></g><g stroke="#443891" stroke-width="1.25" fill="none"><circle cx="10.3" cy="7.8" r="1.7"/><rect x="5.6" y="12.4" width="9.4" height="2.9" rx="1.45"/></g></svg>
<svg style="position:absolute;left:1997px;top:1116.86px" width="8" height="17" viewBox="0 0 8 17" fill="none"><g fill="#443891"><rect x="2.6" y="1" width="2.8" height="2.8" rx="0.7"/><rect x="2.6" y="7.2" width="2.8" height="2.8" rx="0.7"/><rect x="2.6" y="13.4" width="2.8" height="2.8" rx="0.7"/></g></svg>
<div class="t" style="left:181.00px;top:1201.92px;font-size:19.0px;line-height:19.0px;color:#363636;font-weight:400;font-style:normal;">No of objects</div>
<div class="t" style="left:314.50px;top:1202.22px;font-size:18.4px;line-height:18.4px;color:#363636;font-weight:400;font-style:normal;">10</div>
<svg style="position:absolute;left:341px;top:1208px" width="18" height="11" viewBox="0 0 18 11" fill="none"><path d="M1.5 1.5 L8.5 8.5 L15.5 1.5" stroke="#9a9a9a" stroke-width="1.4"/></svg>
<svg style="position:absolute;left:1003px;top:1203px" width="12" height="17" viewBox="0 0 12 17" fill="none"><path d="M9.5 1.5 L2.8 8.3 L9.5 15" stroke="#8a8a8a" stroke-width="1.7" fill="none"/></svg>
<div style="position:absolute;left:1037px;top:1188.5px;width:43.5px;height:46px;background:#f4f4f4;border:1px solid #e4e4e4;border-radius:3px;box-sizing:border-box"></div>
<div class="t" style="left:1054.50px;top:1204.28px;font-size:15.5px;line-height:15.5px;color:#44388f;font-weight:400;font-style:normal;-webkit-text-stroke:0.5px #44388f">1</div>
<div class="t" style="left:1108.00px;top:1204.28px;font-size:15.5px;line-height:15.5px;color:#44388f;font-weight:400;font-style:normal;-webkit-text-stroke:0.5px #44388f">2</div>
<div class="t" style="left:1162.50px;top:1204.28px;font-size:15.5px;line-height:15.5px;color:#44388f;font-weight:400;font-style:normal;-webkit-text-stroke:0.5px #44388f">3</div>
<svg style="position:absolute;left:1211px;top:1203px" width="12" height="17" viewBox="0 0 12 17" fill="none"><path d="M2.5 1.5 L9.2 8.3 L2.5 15" stroke="#443891" stroke-width="1.9" fill="none"/></svg>
<div style="position:absolute;left:1793px;top:196px;width:186px;height:365.5px;background:#f4f4f4;box-shadow:0 3px 10px rgba(0,0,0,0.16)"></div>
<div class="t" style="left:1813.50px;top:213.72px;font-size:18.4px;line-height:18.4px;color:#4e4e4e;font-weight:400;font-style:normal;">View Json</div>
<div class="t" style="left:1813.50px;top:258.27px;font-size:18.4px;line-height:18.4px;color:#4e4e4e;font-weight:400;font-style:normal;">Show Details</div>
<div class="t" style="left:1813.50px;top:302.82px;font-size:18.4px;line-height:18.4px;color:#4e4e4e;font-weight:400;font-style:normal;">Restore</div>
<div class="t" style="left:1813.50px;top:347.37px;font-size:18.4px;line-height:18.4px;color:#4e4e4e;font-weight:400;font-style:normal;">Share</div>
<div class="t" style="left:1813.50px;top:391.92px;font-size:18.4px;line-height:18.4px;color:#4e4e4e;font-weight:400;font-style:normal;">Edit</div>
<div class="t" style="left:1813.50px;top:436.47px;font-size:18.4px;line-height:18.4px;color:#4e4e4e;font-weight:400;font-style:normal;">Duplicate</div>
<div class="t" style="left:1813.50px;top:481.02px;font-size:18.4px;line-height:18.4px;color:#4e4e4e;font-weight:400;font-style:normal;">Retry</div>
<div class="t" style="left:1813.50px;top:525.57px;font-size:18.4px;line-height:18.4px;color:#4e4e4e;font-weight:400;font-style:normal;">Remove</div>
<div style="position:absolute;left:1784.5px;top:468.5px;width:202px;height:47px;border:3.3px solid #e85a25;border-radius:8px;box-sizing:border-box"></div>
<svg style="position:absolute;left:1576px;top:474px" width="202" height="23" viewBox="0 0 202 23" fill="none"><path d="M1.5 11.4 H178" stroke="#e85a25" stroke-width="3.6"/><path d="M175 2.5 L199.8 11.4 L175 20.2 Z" fill="#e85a25"/></svg>

<!--BODY-->
</body></html>
